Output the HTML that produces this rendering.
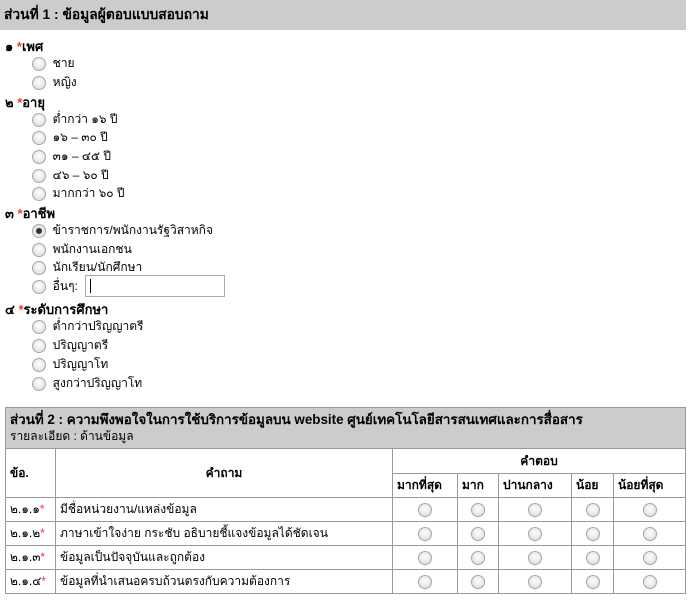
<!DOCTYPE html>
<html><head><meta charset="utf-8"><style>
body{margin:0;width:691px;height:601px;background:#fff;font-family:Tahoma,"Liberation Sans",sans-serif;font-size:12px;color:#000;position:relative;overflow:hidden}
.a{position:absolute;white-space:nowrap}
.hd{position:absolute;left:0;top:0;width:686px;height:30px;background:#cccccc;font-weight:bold;font-size:13.8px;line-height:30px;padding-left:4px;box-sizing:border-box}
.q{font-weight:bold;font-size:13px}
.r{color:#f33}
.rd{display:inline-block;width:12px;height:12px;border:1px solid #a5a5a5;border-radius:50%;background:radial-gradient(circle at 50% 40%,#fff,#d8d8d8);vertical-align:middle}
.sel{background:radial-gradient(circle,#333 0 2.5px,#eee 3.5px,#ddd)}
table{position:absolute;left:5px;top:407px;border-collapse:collapse;width:681px}
td{border:1px solid #999;padding:0 4px;height:23px;font-size:12px}
.c{text-align:center}
</style></head><body>
<div class="hd">ส่วนที่ 1 : ข้อมูลผู้ตอบแบบสอบถาม</div>
<div class="a q" style="left:5px;top:36px">๑ <span class="r">*</span>เพศ</div>
<div class="a" style="left:32px;top:54px"><span class="rd"></span>&nbsp; ชาย</div>
<div class="a" style="left:32px;top:73px"><span class="rd"></span>&nbsp; หญิง</div>
<div class="a q" style="left:5px;top:92px">๒ <span class="r">*</span>อายุ</div>
<div class="a" style="left:32px;top:110px"><span class="rd"></span>&nbsp; ต่ำกว่า ๑๖ ปี</div>
<div class="a" style="left:32px;top:128px"><span class="rd"></span>&nbsp; ๑๖ – ๓๐ ปี</div>
<div class="a" style="left:32px;top:147px"><span class="rd"></span>&nbsp; ๓๑ – ๔๕ ปี</div>
<div class="a" style="left:32px;top:166px"><span class="rd"></span>&nbsp; ๔๖ – ๖๐ ปี</div>
<div class="a" style="left:32px;top:184px"><span class="rd"></span>&nbsp; มากกว่า ๖๐ ปี</div>
<div class="a q" style="left:5px;top:203px">๓ <span class="r">*</span>อาชีพ</div>
<div class="a" style="left:32px;top:221px"><span class="rd sel"></span>&nbsp; ข้าราชการ/พนักงานรัฐวิสาหกิจ</div>
<div class="a" style="left:32px;top:240px"><span class="rd"></span>&nbsp; พนักงานเอกชน</div>
<div class="a" style="left:32px;top:258px"><span class="rd"></span>&nbsp; นักเรียน/นักศึกษา</div>
<div class="a" style="left:32px;top:277px"><span class="rd"></span>&nbsp; อื่นๆ:</div>
<div class="a" style="left:85px;top:275px;width:140px;height:22px;border:1px solid #aaa;box-sizing:border-box"><div style="position:absolute;left:4px;top:3px;width:1px;height:14px;background:#000"></div></div>
<div class="a q" style="left:5px;top:299px">๔ <span class="r">*</span>ระดับการศึกษา</div>
<div class="a" style="left:32px;top:317px"><span class="rd"></span>&nbsp; ต่ำกว่าปริญญาตรี</div>
<div class="a" style="left:32px;top:336px"><span class="rd"></span>&nbsp; ปริญญาตรี</div>
<div class="a" style="left:32px;top:355px"><span class="rd"></span>&nbsp; ปริญญาโท</div>
<div class="a" style="left:32px;top:374px"><span class="rd"></span>&nbsp; สูงกว่าปริญญาโท</div>
<table>
<tr><td colspan="7" style="background:#ccc;height:40px;line-height:16px"><b style="font-size:13.4px">ส่วนที่ 2 : ความพึงพอใจในการใช้บริการข้อมูลบน website ศูนย์เทคโนโลยีสารสนเทศและการสื่อสาร</b><br>รายละเอียด : ด้านข้อมูล</td></tr>
<tr><td rowspan="2" style="width:41px;height:46px"><b>ข้อ.</b></td><td rowspan="2" class="c" style="width:328px"><b>คำถาม</b></td><td colspan="5" class="c" style="height:24px"><b>คำตอบ</b></td></tr>
<tr><td style="width:56px"><b>มากที่สุด</b></td><td style="width:32px"><b>มาก</b></td><td style="width:64px"><b>ปานกลาง</b></td><td style="width:33px"><b>น้อย</b></td><td><b>น้อยที่สุด</b></td></tr>
<tr><td>๒.๑.๑<span class="r">*</span></td><td>มีชื่อหน่วยงาน/แหล่งข้อมูล</td><td class="c"><span class="rd"></span></td><td class="c"><span class="rd"></span></td><td class="c"><span class="rd"></span></td><td class="c"><span class="rd"></span></td><td class="c"><span class="rd"></span></td></tr>
<tr><td>๒.๑.๒<span class="r">*</span></td><td>ภาษาเข้าใจง่าย กระชับ อธิบายชี้แจงข้อมูลได้ชัดเจน</td><td class="c"><span class="rd"></span></td><td class="c"><span class="rd"></span></td><td class="c"><span class="rd"></span></td><td class="c"><span class="rd"></span></td><td class="c"><span class="rd"></span></td></tr>
<tr><td>๒.๑.๓<span class="r">*</span></td><td>ข้อมูลเป็นปัจจุบันและถูกต้อง</td><td class="c"><span class="rd"></span></td><td class="c"><span class="rd"></span></td><td class="c"><span class="rd"></span></td><td class="c"><span class="rd"></span></td><td class="c"><span class="rd"></span></td></tr>
<tr><td>๒.๑.๔<span class="r">*</span></td><td>ข้อมูลที่นำเสนอครบถ้วนตรงกับความต้องการ</td><td class="c"><span class="rd"></span></td><td class="c"><span class="rd"></span></td><td class="c"><span class="rd"></span></td><td class="c"><span class="rd"></span></td><td class="c"><span class="rd"></span></td></tr>
</table>
</body></html>
